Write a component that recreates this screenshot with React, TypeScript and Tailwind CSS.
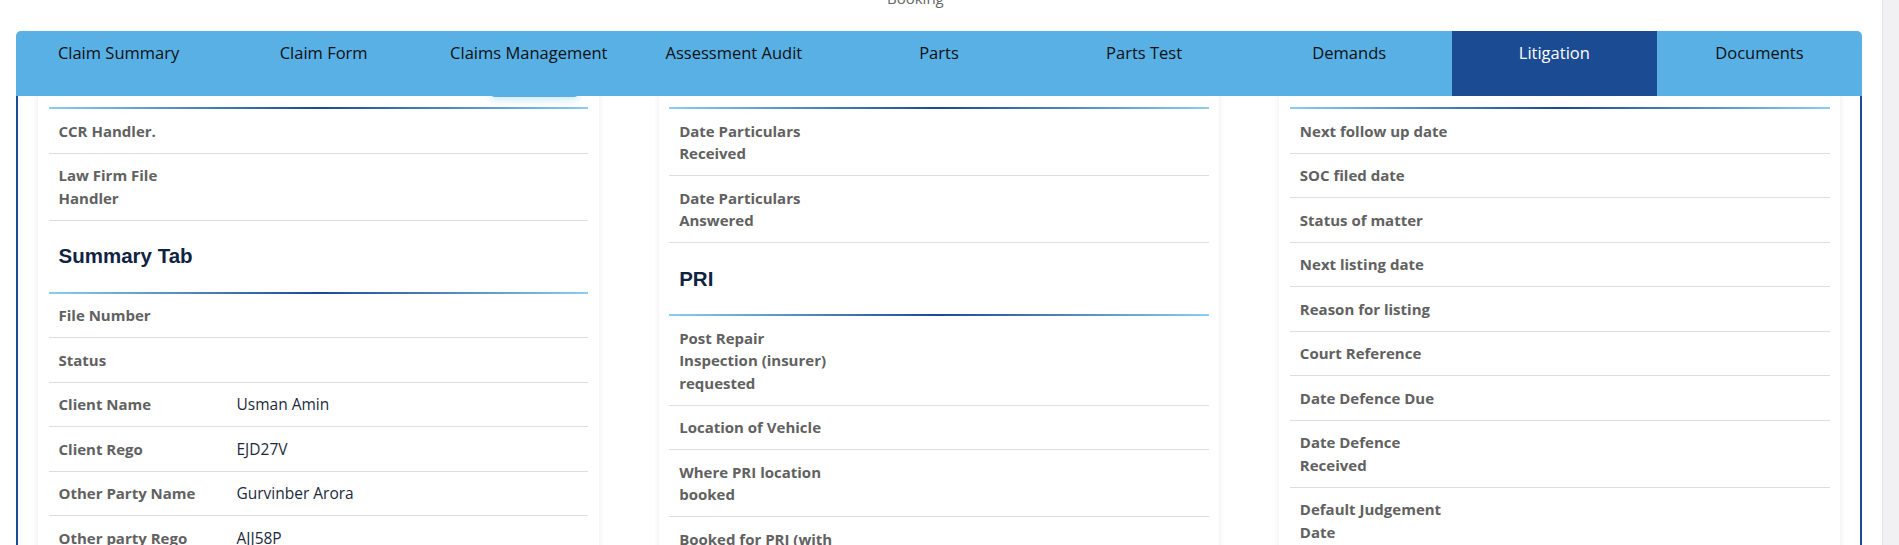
import React from "react";

type Row =
  | { kind: "field"; label: string[]; value?: string }
  | { kind: "heading"; title: string };

const tabs = [
  "Claim Summary",
  "Claim Form",
  "Claims Management",
  "Assessment Audit",
  "Parts",
  "Parts Test",
  "Demands",
  "Litigation",
  "Documents",
];

const colOne: Row[] = [
  { kind: "field", label: ["CCR Handler."] },
  { kind: "field", label: ["Law Firm File", "Handler"] },
  { kind: "heading", title: "Summary Tab" },
  { kind: "field", label: ["File Number"] },
  { kind: "field", label: ["Status"] },
  { kind: "field", label: ["Client Name"], value: "Usman Amin" },
  { kind: "field", label: ["Client Rego"], value: "EJD27V" },
  { kind: "field", label: ["Other Party Name"], value: "Gurvinber Arora" },
  { kind: "field", label: ["Other party Rego"], value: "AJJ58P" },
];

const colTwo: Row[] = [
  { kind: "field", label: ["Date Particulars", "Received"] },
  { kind: "field", label: ["Date Particulars", "Answered"] },
  { kind: "heading", title: "PRI" },
  { kind: "field", label: ["Post Repair", "Inspection (insurer)", "requested"] },
  { kind: "field", label: ["Location of Vehicle"] },
  { kind: "field", label: ["Where PRI location", "booked"] },
  { kind: "field", label: ["Booked for PRI (with", "insurer)"] },
];

const colThree: Row[] = [
  { kind: "field", label: ["Next follow up date"] },
  { kind: "field", label: ["SOC filed date"] },
  { kind: "field", label: ["Status of matter"] },
  { kind: "field", label: ["Next listing date"] },
  { kind: "field", label: ["Reason for listing"] },
  { kind: "field", label: ["Court Reference"] },
  { kind: "field", label: ["Date Defence Due"] },
  { kind: "field", label: ["Date Defence", "Received"] },
  { kind: "field", label: ["Default Judgement", "Date"] },
];

function GradientLine() {
  return <div className="h-[2px] bg-linear-to-r from-[#8ccdf1] via-[#1b4b93] to-[#8ccdf1]" />;
}

function Card({ rows, withButton }: { rows: Row[]; withButton?: boolean }) {
  return (
    <div className="relative -mt-[20px] bg-white px-[10.5px] shadow-[0_0_6px_rgba(0,0,0,0.09)]">
      <div className="relative h-[31px]">
        {withButton && (
          <div className="absolute right-[10.5px] top-0 h-[21px] w-[87px] rounded-b-[4px] bg-[#58b0e5] shadow-[0_2px_10px_rgba(88,176,229,0.35)]" />
        )}
      </div>
      <GradientLine />
      {rows.map((r, i) =>
        r.kind === "heading" ? (
          <div key={i}>
            <div className="flex h-[71px] items-center px-[10px]">
              <h3 className="font-['Liberation_Sans',Arial,sans-serif] text-[20.5px] font-bold leading-[24px] text-[#0f2341]">
                {r.title}
              </h3>
            </div>
            <GradientLine />
          </div>
        ) : (
          <div key={i} className="flex border-b border-[#dedede] py-[10.5px]">
            <div className="w-[188px] shrink-0 px-[10px] text-[15px] font-bold leading-[22.5px] text-[#616161]">
              {r.label.map((l, j) => (
                <div key={j} className="whitespace-nowrap">
                  {l}
                </div>
              ))}
            </div>
            <div className="flex-1 text-[15.5px] leading-[22.5px] text-[#1d2a3c]">{r.value}</div>
          </div>
        )
      )}
    </div>
  );
}

export default function App() {
  return (
    <div className="flex h-[545px] overflow-hidden bg-white font-['Open_Sans',sans-serif]">
      <div className="min-w-0 flex-1">
        {/* tail of the previous section, scrolled off */}
        <div className="h-[31px] overflow-hidden">
          <div className="-mt-[12px] pl-[887px] text-[15px] leading-[20px] text-[#666]">Booking</div>
        </div>

        <div className="ml-[16px] w-[1846px]">
          <nav className="relative z-10 grid h-[65px] grid-cols-9 overflow-hidden rounded-t-[5px] bg-[#58b0e5]">
            {tabs.map((t) => (
              <button
                key={t}
                className={`flex h-full justify-center pt-[9.5px] text-center text-[16.5px] leading-[24px] ${
                  t === "Litigation" ? "bg-[#1b4b93] text-white" : "text-[#111]"
                }`}
              >
                {t}
              </button>
            ))}
          </nav>

          <div className="grid grid-cols-3 gap-x-[60px] border-x-2 border-[#1b4b93] px-[20px] pb-[40px]">
            <Card rows={colOne} withButton />
            <Card rows={colTwo} />
            <Card rows={colThree} />
          </div>
        </div>
      </div>

      {/* page scrollbar track */}
      <div className="w-[17px] shrink-0 border-l border-[#e4e4e6] bg-[#f1f1f3]" />
    </div>
  );
}
